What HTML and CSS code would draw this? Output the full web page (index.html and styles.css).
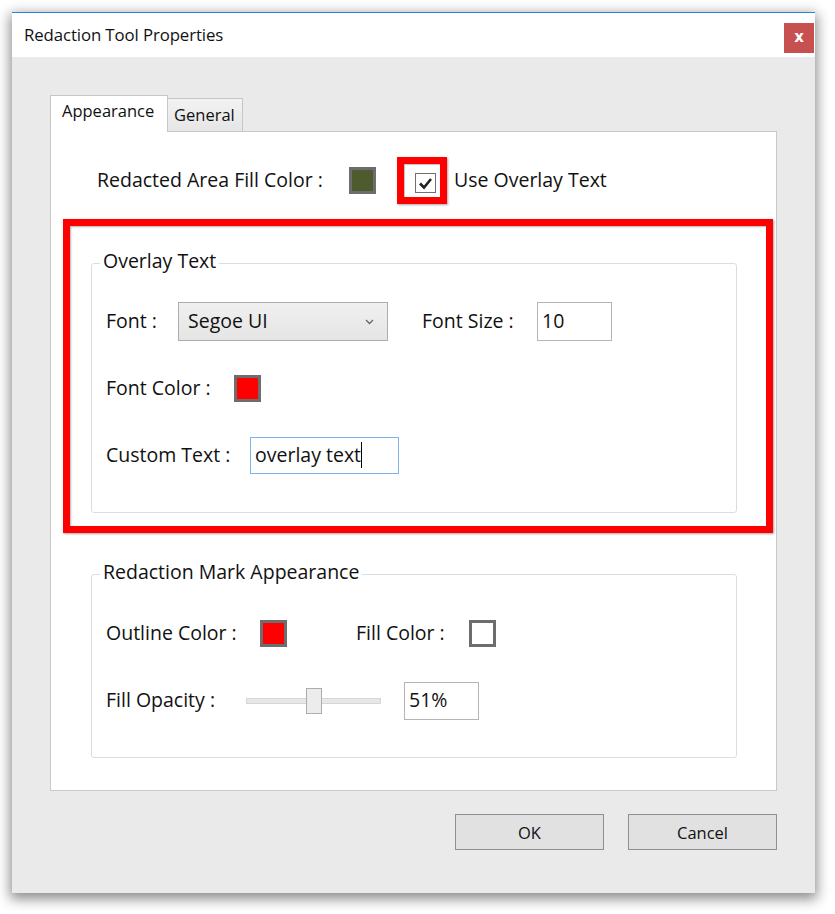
FILE: index.html
```html
<!DOCTYPE html>
<html>
<head>
<meta charset="utf-8">
<link rel="stylesheet" href="styles.css">
</head>
<body>
<div class="dialog">
  <div class="titlebar">
    <span class="title">Redaction Tool Properties</span>
    <span class="close">x</span>
  </div>
  <div class="body">
    <div class="tabs">
      <div class="tab active">Appearance</div>
      <div class="tab">General</div>
    </div>
    <div class="panel">
      <div class="row top-row">
        <span class="lbl w-fill">Redacted Area Fill Color :</span>
        <span class="swatch green"></span>
        <span class="hl-check">
          <span class="checkbox">
            <svg width="15" height="13" viewBox="0 0 15 13"><polyline points="2,6.5 6,10.5 13,2" fill="none" stroke="#222" stroke-width="2.6"/></svg>
          </span>
        </span>
        <span class="lbl check-lbl">Use Overlay Text</span>
      </div>
      <div class="hl-group">
        <fieldset class="group g1">
          <legend>Overlay Text</legend>
          <div class="row">
            <span class="lbl w-font">Font :</span>
            <span class="select">Segoe UI
              <svg class="chev" width="9" height="6" viewBox="0 0 9 6"><polyline points="1,1 4.5,4.5 8,1" fill="none" stroke="#666" stroke-width="1.3"/></svg>
            </span>
            <span class="lbl w-size">Font Size :</span>
            <span class="input w-num">10</span>
          </div>
          <div class="row">
            <span class="lbl w-fcolor">Font Color :</span>
            <span class="swatch red"></span>
          </div>
          <div class="row">
            <span class="lbl w-custom">Custom Text :</span>
            <span class="input focused w-text"><span class="caret">overlay text</span></span>
          </div>
        </fieldset>
      </div>
      <fieldset class="group g2">
        <legend>Redaction Mark Appearance</legend>
        <div class="row">
          <span class="lbl w-outline">Outline Color :</span>
          <span class="swatch red"></span>
          <span class="lbl w-fillc">Fill Color :</span>
          <span class="swatch white"></span>
        </div>
        <div class="row">
          <span class="lbl w-opacity">Fill Opacity :</span>
          <span class="slider"><span class="track"></span><span class="thumb"></span></span>
          <span class="input w-num pct">51%</span>
        </div>
      </fieldset>
    </div>
    <div class="buttons">
      <span class="btn">OK</span>
      <span class="btn">Cancel</span>
    </div>
  </div>
</div>
</body>
</html>
```

FILE: styles.css
```css
* { box-sizing: border-box; }
html, body { margin: 0; padding: 0; background: #ffffff; }
body {
  font-family: "Open Sans", "Noto Sans", sans-serif;
  color: #111;
  width: 835px;
  height: 914px;
  overflow: hidden;
}
.dialog {
  margin: 12px 0 0 12px;
  width: 803px;
  height: 881px;
  border-top: 1px solid #2a86d8;
  box-shadow: 0 4px 12px 2px rgba(0,0,0,0.45);
  display: flex;
  flex-direction: column;
  background: #eaeaea;
}
.titlebar {
  height: 44px;
  background: #ffffff;
  display: flex;
  align-items: flex-start;
  justify-content: space-between;
  padding-left: 12px;
  padding-right: 1px;
}
.title {
  font-size: 16.8px;
  line-height: 43px;
  letter-spacing: -0.1px;
}
.close {
  margin-top: 10px;
  width: 30px;
  height: 30px;
  background: #c75050;
  color: #fff;
  font-family: "DejaVu Sans", sans-serif;
  font-weight: bold;
  font-size: 15px;
  line-height: 28px;
  text-align: center;
}
.body {
  flex: 1;
  padding: 38px 38px 0 38px;
  display: flex;
  flex-direction: column;
}
.tabs {
  display: flex;
  align-items: flex-end;
  height: 36px;
}
.tab {
  border: 1px solid #c6c6c6;
  border-bottom: none;
  font-size: 16.5px;
}
.tab.active {
  width: 118px;
  height: 37px;
  margin-bottom: -1px;
  background: #fff;
  padding: 3px 0 0 11px;
  position: relative;
  z-index: 1;
}
.tab:not(.active) {
  width: 75px;
  height: 33px;
  background: linear-gradient(#f2f2f2, #e6e6e6);
  border-left: none;
  padding: 4px 0 0 6px;
}
.panel {
  height: 660px;
  background: #fff;
  border: 1px solid #c9c9c9;
  padding-top: 25px;
}
.row {
  display: flex;
  align-items: center;
  height: 39px;
  font-size: 19.5px;
}
.lbl { white-space: nowrap; flex: none; padding-bottom: 3px; }
.top-row { height: 47px; padding-left: 46px; }
.w-fill { width: 252px; }
.swatch {
  width: 27px;
  height: 27px;
  border: 3px solid #6d6d6d;
  flex: none;
}
.swatch.green { background: #4d5b2e; }
.swatch.red { background: #ff0000; }
.swatch.white { background: #fff; }
.hl-check {
  margin-left: 21px;
  width: 50px;
  height: 47px;
  border: 7px solid #ff0000;
  box-shadow: 1px 1px 2px rgba(0,0,0,0.35), inset 1px 1px 1px rgba(0,0,0,0.25);
  padding: 9px 0 0 11px;
  flex: none;
}
.checkbox {
  display: flex;
  align-items: center;
  justify-content: center;
  width: 21px;
  height: 20px;
  border: 1px solid #707070;
  background: #fff;
}
.check-lbl { margin-left: 7px; }
.hl-group {
  margin: 15px 3px 0 12px;
  height: 314px;
  border: 7px solid #ff0000;
  box-shadow: 1px 1px 2px rgba(0,0,0,0.35), inset 1px 1px 2px rgba(0,0,0,0.3);
  padding: 23px 0 0 21px;
}
.group {
  margin: 0;
  padding: 0 0 0 14px;
  width: 646px;
  border: 1px solid #d7dfe6;
  border-radius: 3px;
  min-inline-size: 0;
}
.group legend {
  font-size: 19.5px;
  line-height: 24px;
  padding: 0 3px 4px 3px;
  margin-left: -6px;
}
.g1 { padding-bottom: 37px; }
.g1 .row:first-of-type { margin-top: 25px; }
.g1 .row + .row { margin-top: 28px; }
.g2 {
  margin: 27px 0 0 40px;
  padding-bottom: 37px;
}
.g2 .row:first-of-type { margin-top: 26px; }
.g2 .row + .row { margin-top: 28px; }
.w-font { width: 72px; }
.select {
  width: 210px;
  height: 39px;
  border: 1px solid #adadad;
  background: linear-gradient(#f0f0f0, #e5e5e5);
  display: flex;
  align-items: center;
  padding: 0 0 3px 9px;
  position: relative;
  flex: none;
}
.chev { position: absolute; right: 13px; top: 16px; }
.w-size { width: 115px; margin-left: 34px; }
.input {
  height: 39px;
  border: 1px solid #b4b4b4;
  background: #fff;
  display: flex;
  align-items: center;
  padding: 0 0 3px 4px;
  flex: none;
}
.w-num { width: 75px; }
.w-fcolor { width: 128px; }
.w-custom { width: 144px; }
.w-text { width: 149px; height: 37px; padding-bottom: 1px; }
.input.focused { border-color: #7cb3ea; }
.caret { border-right: 1px solid #000; padding-right: 0; line-height: 26px; }
.w-outline { width: 154px; }
.w-fillc { width: 113px; margin-left: 69px; }
.w-opacity { width: 140px; }
.slider {
  position: relative;
  width: 135px;
  height: 26px;
  flex: none;
  display: flex;
  align-items: center;
}
.track {
  width: 135px;
  height: 6px;
  background: #e7e7e7;
  border: 1px solid #d6d6d6;
}
.thumb {
  position: absolute;
  left: 60px;
  top: 0;
  width: 16px;
  height: 26px;
  background: #ececec;
  border: 1px solid #adadad;
}
.pct { margin-left: 23px; height: 38px; }
.buttons {
  display: flex;
  justify-content: flex-end;
  gap: 24px;
  margin-top: 23px;
}
.btn {
  width: 149px;
  height: 36px;
  background: #e1e1e1;
  border: 1px solid #8f8f8f;
  display: flex;
  align-items: center;
  justify-content: center;
  font-size: 16.5px;
}
```
